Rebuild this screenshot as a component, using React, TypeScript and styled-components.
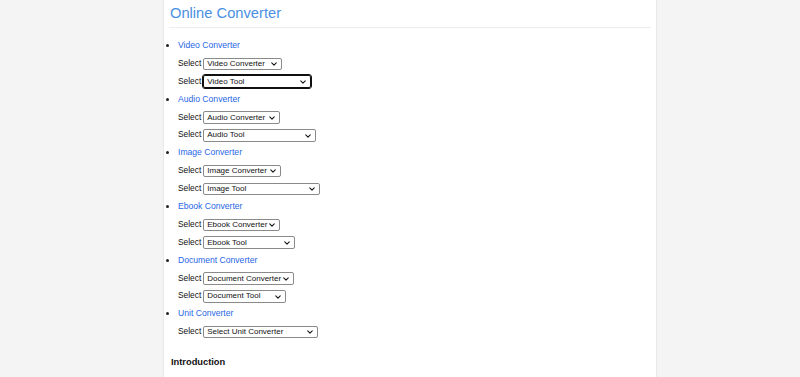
import styled, { createGlobalStyle } from 'styled-components';

const GlobalStyle = createGlobalStyle`
  html, body {
    margin: 0;
    padding: 0;
    background: #f4f4f4;
  }
  body {
    font-family: "Liberation Sans", Arial, sans-serif;
  }
`;

interface ToolSelect {
  label: string;
  width: number;
  focused?: boolean;
}

interface ConverterGroup {
  title: string;
  selects: ToolSelect[];
}

const groups: ConverterGroup[] = [
  {
    title: 'Video Converter',
    selects: [
      { label: 'Video Converter', width: 79 },
      { label: 'Video Tool', width: 108, focused: true },
    ],
  },
  {
    title: 'Audio Converter',
    selects: [
      { label: 'Audio Converter', width: 77 },
      { label: 'Audio Tool', width: 113 },
    ],
  },
  {
    title: 'Image Converter',
    selects: [
      { label: 'Image Converter', width: 78 },
      { label: 'Image Tool', width: 117 },
    ],
  },
  {
    title: 'Ebook Converter',
    selects: [
      { label: 'Ebook Converter', width: 77 },
      { label: 'Ebook Tool', width: 92 },
    ],
  },
  {
    title: 'Document Converter',
    selects: [
      { label: 'Document Converter', width: 91 },
      { label: 'Document Tool', width: 83 },
    ],
  },
  {
    title: 'Unit Converter',
    selects: [{ label: 'Select Unit Converter', width: 115 }],
  },
];

const Chevron = () => (
  <ChevronIcon viewBox="0 0 8 5" width="6" height="4">
    <path d="M1 1l3 3 3-3" fill="none" stroke="#111" strokeWidth="1.4" strokeLinecap="round" strokeLinejoin="round" />
  </ChevronIcon>
);

export default function App() {
  return (
    <>
      <GlobalStyle />
      <Page>
        <Panel>
          <Title>Online Converter</Title>
          <Divider />
          <ConverterList>
            {groups.map((group) => (
              <Item key={group.title}>
                <ItemLink href="#">{group.title}</ItemLink>
                {group.selects.map((s) => (
                  <SelectRow key={s.label}>
                    <SelectLabel>Select</SelectLabel>
                    <SelectWrap $width={s.width} $focused={s.focused}>
                      <ToolBox defaultValue={s.label}>
                        <option>{s.label}</option>
                      </ToolBox>
                      <Chevron />
                    </SelectWrap>
                  </SelectRow>
                ))}
              </Item>
            ))}
          </ConverterList>
          <SectionTitle>Introduction</SectionTitle>
        </Panel>
      </Page>
    </>
  );
}

const Page = styled.div`
  display: flex;
  min-height: 377px;
  padding-left: 163px;
`;

const Panel = styled.div`
  width: 494px;
  min-height: 377px;
  background: #ffffff;
  border-left: 1px solid #e9e9e9;
  border-right: 1px solid #e9e9e9;
  padding: 4px 5px 0 5px;
  box-sizing: border-box;
`;

const Title = styled.h1`
  margin: 0 0 0 1px;
  font-size: 14.7px;
  line-height: 18px;
  font-weight: normal;
  color: #4a90e2;
`;

const Divider = styled.div`
  height: 1px;
  background: #ededed;
  margin: 5px 0 9px 0;
`;

const ConverterList = styled.ul`
  margin: 0;
  padding: 0 0 0 9px;
  list-style: disc;
  font-size: 8.6px;
`;

const Item = styled.li`
  line-height: 17.9px;
  &::marker {
    font-size: 9px;
    color: #222;
  }
`;

const ItemLink = styled.a`
  display: block;
  height: 17.9px;
  color: #1f66e5;
  text-decoration: none;
  font-size: 8.6px;
`;

const SelectRow = styled.div`
  display: flex;
  align-items: center;
  height: 17.9px;
  gap: 2px;
`;

const SelectLabel = styled.span`
  font-size: 8.4px;
  color: #111;
`;

const SelectWrap = styled.div<{ $width: number; $focused?: boolean }>`
  position: relative;
  display: flex;
  width: ${({ $width }) => $width}px;
  height: 12.5px;
  box-sizing: border-box;
  border: 1px solid ${({ $focused }) => ($focused ? '#101010' : '#8a8a8a')};
  border-radius: 2px;
  background: #fff;
  outline: ${({ $focused }) => ($focused ? '1px solid #101010' : 'none')};
`;

const ToolBox = styled.select`
  appearance: none;
  width: 100%;
  height: 100%;
  margin: 0;
  padding: 0 9px 0 3px;
  font-family: "Liberation Sans", Arial, sans-serif;
  font-size: 8px;
  line-height: 10px;
  color: #111;
  background: transparent;
  border: none;
  outline: none;
`;

const ChevronIcon = styled.svg`
  position: absolute;
  right: 4px;
  top: 3.5px;
  pointer-events: none;
`;

const SectionTitle = styled.h2`
  margin: 14px 0 0 2px;
  font-size: 9.3px;
  line-height: 14px;
  font-weight: bold;
  color: #111;
`;
